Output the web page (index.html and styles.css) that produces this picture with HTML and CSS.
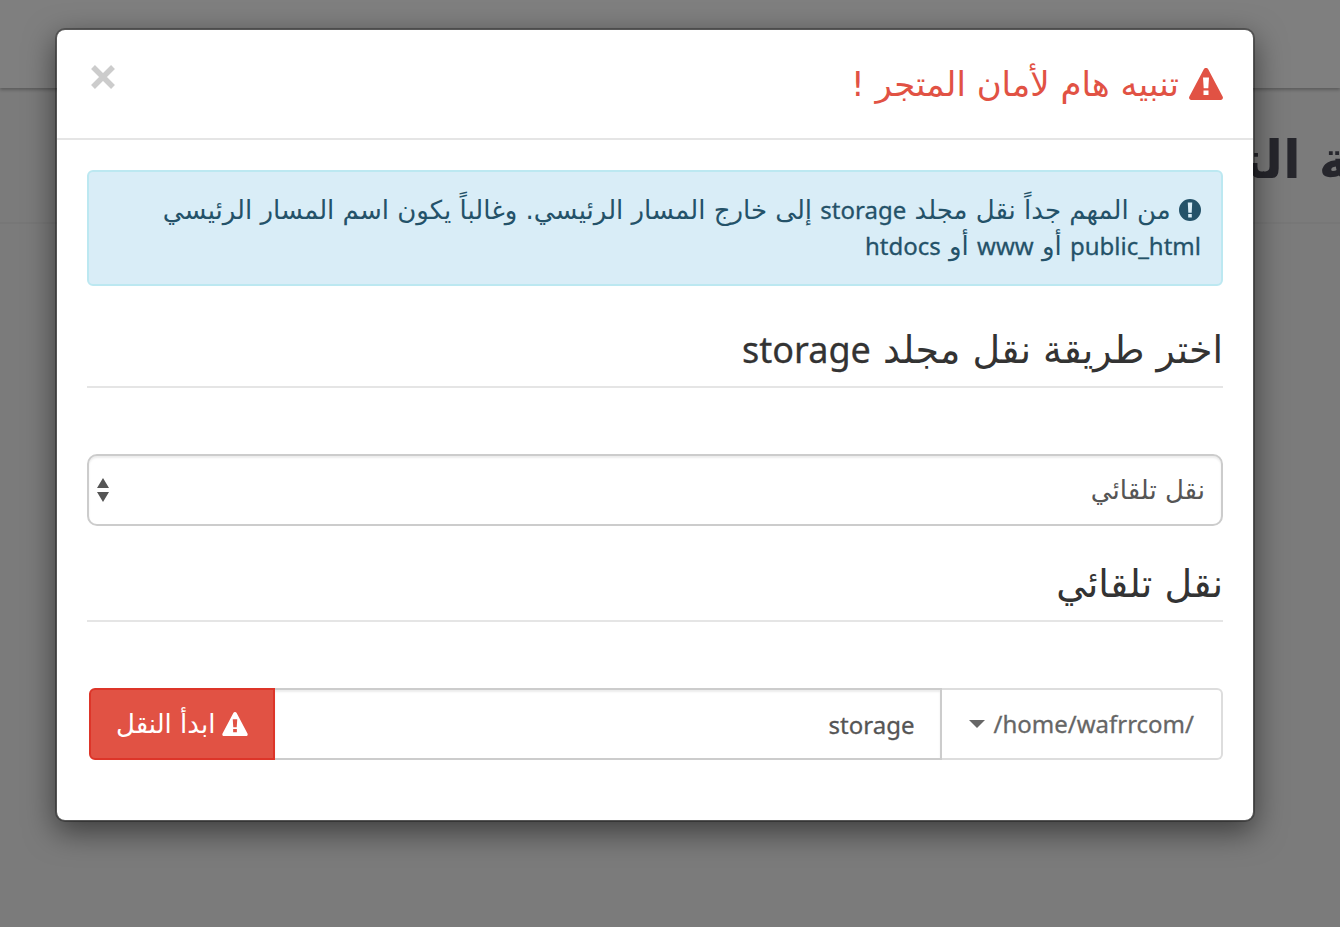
FILE: index.html
```
<!DOCTYPE html>
<html lang="ar" dir="rtl">
<head>
<meta charset="utf-8">
<title>تنبيه هام</title>
<link rel="stylesheet" href="styles.css">
</head>
<body>
<div class="page">
  <div class="topbar"></div>
  <div class="page-title"><h1>لوحة التحكم</h1></div>
</div>
<div class="backdrop">
  <section class="modal" role="dialog" aria-modal="true" aria-labelledby="title">
    <header class="modal-header">
      <h2 class="modal-title" id="title">
        <svg class="icon-warning" viewBox="0 0 34 32" aria-hidden="true"><path fill="currentColor" fill-rule="evenodd" d="M17 0c1 0 1.800.5 2.200 1.300L33.600 28.600C34.500 30.200 33.500 32 31.700 32H2.300C.5 32-.5 30.200.4 28.600L14.800 1.300C15.200.5 16 0 17 0ZM14 9.500l.7 10.800h4.600L20 9.500ZM14.500 22.500v4.500h5v-4.500Z"/></svg>
        <span>تنبيه هام لأمان المتجر !</span>
      </h2>
      <button class="close" type="button" aria-label="إغلاق"><svg viewBox="0 0 24 24" aria-hidden="true"><path d="M2 2l20 20M22 2L2 22" stroke="currentColor" stroke-width="5.500"/></svg></button>
    </header>
    <div class="modal-body">
      <p class="alert"><svg class="icon-info" viewBox="0 0 22 22" aria-hidden="true"><path fill="currentColor" fill-rule="evenodd" d="M11 0a11 11 0 1 0 0 22 11 11 0 0 0 0-22ZM8.800 3.500h4.400l-.5 10.200H9.300ZM9.200 15h3.600v3.400H9.200Z"/></svg> من المهم جداً نقل مجلد <bdi class="latin">storage</bdi> إلى خارج المسار الرئيسي. وغالباً يكون اسم المسار الرئيسي <bdi class="latin">public_html</bdi> أو <bdi class="latin">www</bdi> أو <bdi class="latin">htdocs</bdi></p>
      <h3 class="section-title"><label for="method">اختر طريقة نقل مجلد <bdi class="latin">storage</bdi></label></h3>
      <div class="select-wrap">
        <select id="method" class="select"><option>نقل تلقائي</option></select>
        <svg class="select-arrows" viewBox="0 0 12 24" aria-hidden="true"><path fill="currentColor" d="M0 10 6 0l6 10ZM0 14h12L6 24Z"/></svg>
      </div>
      <h3 class="section-title">نقل تلقائي</h3>
      <form class="group">
        <button class="path-button" type="button"><bdi class="latin" dir="ltr">/home/wafrrcom/</bdi><span class="caret"></span></button>
        <input class="folder latin" type="text" value="storage" aria-label="اسم المجلد">
        <button class="start" type="button"><svg class="icon-warning" viewBox="0 0 34 32" aria-hidden="true"><path fill="currentColor" fill-rule="evenodd" d="M17 0c1 0 1.800.5 2.200 1.300L33.600 28.600C34.500 30.200 33.500 32 31.700 32H2.300C.5 32-.5 30.200.4 28.600L14.800 1.300C15.200.5 16 0 17 0ZM14 9.500l.7 10.800h4.600L20 9.500ZM14.500 22.500v4.500h5v-4.500Z"/></svg><span>ابدأ النقل</span></button>
      </form>
    </div>
  </section>
</div>
</body>
</html>
```
FILE: styles.css
```
* { box-sizing: border-box; }
body {
  margin: 0;
  min-height: 100vh;
  overflow: hidden;
  background: #f6f6f6;
  color: #333;
  font-family: "DejaVu Sans", sans-serif;
  font-size: 26px;
}
h1, h2, h3, p { margin: 0; font-weight: 400; }
button, input, select { font: inherit; margin: 0; }
svg { display: block; flex: none; }
.latin {
  font-family: "Noto Sans", sans-serif;
  font-size: 24px;
  line-height: 1;
  -webkit-text-stroke: 0.3px currentColor;
}

.page { position: absolute; inset: 0; overflow: hidden; }
.topbar { height: 88px; background: #fff; box-shadow: 0 2px 3px rgba(0, 0, 0, .25); }
.page-title { padding: 26px 0 16px; border-bottom: 2px solid #eee; }
.page-title h1 {
  margin-inline-start: -100px;
  font-size: 52px;
  line-height: 92px;
  font-weight: 700;
  color: #4c4c58;
}

.backdrop {
  position: relative;
  min-height: 100vh;
  padding: 28px 85px 60px 55px;
  background: rgba(0, 0, 0, .5);
}
.modal {
  background: #fff;
  background-clip: padding-box;
  border: 2px solid rgba(0, 0, 0, .3);
  border-radius: 10px;
  box-shadow: 0 10px 30px rgba(0, 0, 0, .5);
}
.modal-header {
  display: flex;
  justify-content: space-between;
  align-items: flex-start;
  padding: 30px;
  border-bottom: 2px solid #e5e5e5;
}
.modal-title {
  display: flex;
  align-items: center;
  gap: 10px;
  font-size: 34px;
  line-height: 48px;
  color: #e15244;
}
.icon-warning { width: 34px; height: 32px; }
.close { border: 0; padding: 5px 4px; background: none; color: #ccc; }
.close svg { width: 24px; height: 24px; }

.modal-body { padding: 30px 30px 60px; }
.alert {
  margin-bottom: 38px;
  padding: 20px;
  border: 2px solid #bce8f1;
  border-radius: 6px;
  background: #d9edf7;
  color: #245269;
  line-height: 36px;
}
.icon-info { display: inline-block; width: 22px; height: 22px; vertical-align: -2px; }
.section-title {
  margin: 32px 0 66px;
  padding-bottom: 10px;
  border-bottom: 2px solid #e5e5e5;
  font-size: 38px;
  line-height: 52px;
}
.section-title .latin { font-size: 36px; }
.select-wrap { position: relative; }
.select {
  appearance: none;
  display: block;
  width: 100%;
  height: 72px;
  padding: 0 16px;
  border: 2px solid #ccc;
  border-radius: 10px;
  background: #fff;
  box-shadow: inset 0 2px 2px rgba(0, 0, 0, .08);
  color: #555;
}
.select-arrows {
  position: absolute;
  left: 10px;
  top: 24px;
  width: 12px;
  height: 24px;
  color: #555;
}
.group { display: flex; height: 72px; padding-left: 2px; }
.path-button {
  display: flex;
  align-items: center;
  gap: 8px;
  padding: 0 27px;
  border: 2px solid #ddd;
  border-left: 0;
  border-radius: 0 6px 6px 0;
  background: #fff;
  color: #666;
}
.caret { border: 8px solid transparent; border-top-color: currentColor; border-bottom: 0; }
.folder {
  flex: 1;
  min-width: 0;
  padding: 0 26px;
  border: 2px solid #ccc;
  border-left: 0;
  border-radius: 0;
  background: #fff;
  box-shadow: inset 0 2px 2px rgba(0, 0, 0, .08);
  color: #555;
}
.start {
  display: flex;
  align-items: center;
  gap: 7px;
  padding: 0 25px;
  border: 2px solid #dd3529;
  border-radius: 6px 0 0 6px;
  background: #e15244;
  color: #fff;
}
.start .icon-warning { width: 26px; height: 24px; }
```
